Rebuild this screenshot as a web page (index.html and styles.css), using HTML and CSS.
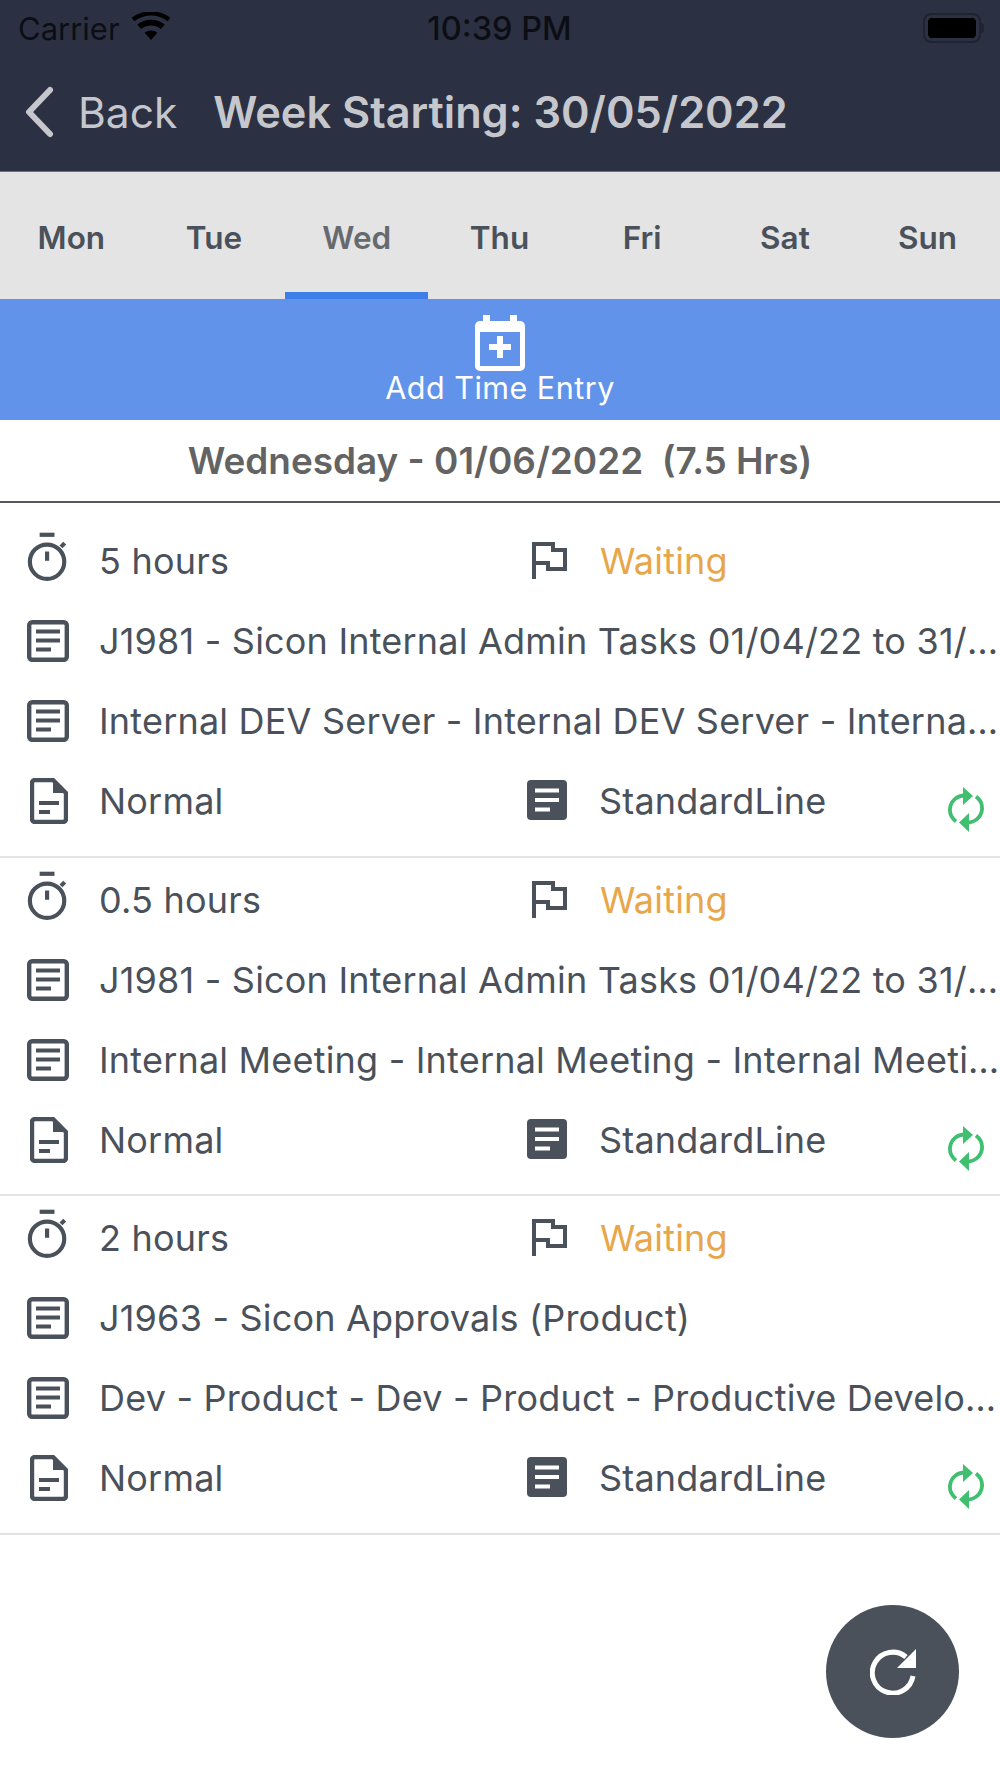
FILE: index.html
```html
<!DOCTYPE html>
<html lang="en">
<head>
<meta charset="utf-8">
<title>Week Starting</title>
<link rel="stylesheet" href="styles.css">
</head>
<body>
<svg class="sprite" aria-hidden="true">
  <defs>
    <symbol id="i-timer" viewBox="0 0 48 56">
      <path d="M15 3h16" class="st" stroke-width="4.500"/>
      <circle cx="23" cy="32" r="18.500" class="st" stroke-width="4.500"/>
      <path d="M23 21v10" class="st" stroke-width="4.500"/>
      <path d="M38 16l4-4" class="st" stroke-width="4.500"/>
    </symbol>
    <symbol id="i-lines" viewBox="0 0 42 42">
      <rect x="2.200" y="2.200" width="37.600" height="37.600" rx="3" class="st" stroke-width="4.400"/>
      <path d="M9 11.500h24M9 20.500h24M9 29.500h15" class="st" stroke-width="4"/>
    </symbol>
    <symbol id="i-file" viewBox="0 0 38 46">
      <path d="M23 2H5a3 3 0 0 0-3 3v36a3 3 0 0 0 3 3h28a3 3 0 0 0 3-3V15z" class="st" stroke-width="4.400"/>
      <path d="M23 2l13 13H23z" class="fl"/>
      <path d="M9 25h20M9 34h11" class="st" stroke-width="4"/>
    </symbol>
    <symbol id="i-flag" viewBox="0 0 36 40">
      <path d="M3 38V3h19v6h12v19H17v-6H3" class="st" stroke-width="4"/>
    </symbol>
    <symbol id="i-card" viewBox="0 0 42 42">
      <rect x="0" y="0" width="40" height="40" rx="4" class="fl"/>
      <path d="M8 10.500h24M8 20h24M8 29.500h15" class="stw" stroke-width="4"/>
    </symbol>
    <symbol id="i-sync" viewBox="0 0 36 48">
      <path d="M8 36.500C3.500 33 1.500 28.500 2 23.500 2.800 16 9 10.500 17 10.500h2" class="stg" stroke-width="3.800"/>
      <path d="M28 11.500c4.500 3.500 6.500 8 6 13-.8 7.500-7 13-15 13h-2" class="stg" stroke-width="3.800"/>
      <path d="M15 2l10 9-10 9z" class="flg"/>
      <path d="M21 28l-10 9.500 10 9.500z" class="flg"/>
    </symbol>
  </defs>
</svg>

<div class="screen">
  <header class="topbar">
    <div class="status">
      <div class="status-left">
        <span>Carrier</span>
        <svg class="wifi" viewBox="0 0 40 30"><path d="M20 29l-6.500-7.500c3.700-3 9.300-3 13 0zM9.800 17.500L5.800 13c8-6.700 20.400-6.700 28.400 0l-4 4.500c-5.800-4.800-14.600-4.800-20.400 0zM2.800 9.500L0 6c11-9 29-9 40 0l-2.800 3.500C27.500 1.700 12.500 1.700 2.800 9.500z"/></svg>
      </div>
      <span class="clock">10:39 PM</span>
      <span class="battery"><span class="battery-level"></span></span>
    </div>
    <div class="nav">
      <svg class="chevron" viewBox="0 0 32 52"><path d="M26 4L5 26l21 22"/></svg>
      <span class="back">Back</span>
      <h1 class="title">Week Starting: 30/05/2022</h1>
    </div>
  </header>

  <nav class="tabs">
    <span class="tab">Mon</span>
    <span class="tab">Tue</span>
    <span class="tab tab-active">Wed</span>
    <span class="tab">Thu</span>
    <span class="tab">Fri</span>
    <span class="tab">Sat</span>
    <span class="tab">Sun</span>
  </nav>

  <button class="add">
    <svg class="add-icon" viewBox="0 0 50 56">
      <path d="M8 0h7v6h20V0h7v6h3a5 5 0 0 1 5 5v40a5 5 0 0 1-5 5H5a5 5 0 0 1-5-5V11a5 5 0 0 1 5-5h3zM5 17v34h40V17zM22 21h6v8h8v6h-8v8h-6v-8h-8v-6h8z" fill-rule="evenodd"/>
    </svg>
    <span>Add Time Entry</span>
  </button>

  <div class="day">Wednesday - 01/06/2022&nbsp; (7.5 Hrs)</div>

  <div class="entries">
    <section class="entry">
      <div class="row">
        <div class="cell"><svg class="ic ic-timer"><use href="#i-timer"/></svg><span>5 hours</span></div>
        <div class="cell"><svg class="ic ic-flag"><use href="#i-flag"/></svg><span class="waiting">Waiting</span></div>
      </div>
      <div class="row"><div class="cell cell-wide"><svg class="ic ic-lines"><use href="#i-lines"/></svg><span class="clip">J1981 - Sicon Internal Admin Tasks 01/04/22 to 31/03/23</span></div></div>
      <div class="row"><div class="cell cell-wide"><svg class="ic ic-lines"><use href="#i-lines"/></svg><span class="clip">Internal DEV Server - Internal DEV Server - Internal DEV Server</span></div></div>
      <div class="row">
        <div class="cell"><svg class="ic ic-file"><use href="#i-file"/></svg><span>Normal</span></div>
        <div class="cell"><svg class="ic ic-card"><use href="#i-card"/></svg><span>StandardLine</span></div>
        <svg class="sync"><use href="#i-sync"/></svg>
      </div>
    </section>

    <section class="entry">
      <div class="row">
        <div class="cell"><svg class="ic ic-timer"><use href="#i-timer"/></svg><span>0.5 hours</span></div>
        <div class="cell"><svg class="ic ic-flag"><use href="#i-flag"/></svg><span class="waiting">Waiting</span></div>
      </div>
      <div class="row"><div class="cell cell-wide"><svg class="ic ic-lines"><use href="#i-lines"/></svg><span class="clip">J1981 - Sicon Internal Admin Tasks 01/04/22 to 31/03/23</span></div></div>
      <div class="row"><div class="cell cell-wide"><svg class="ic ic-lines"><use href="#i-lines"/></svg><span class="clip">Internal Meeting - Internal Meeting - Internal Meeting</span></div></div>
      <div class="row">
        <div class="cell"><svg class="ic ic-file"><use href="#i-file"/></svg><span>Normal</span></div>
        <div class="cell"><svg class="ic ic-card"><use href="#i-card"/></svg><span>StandardLine</span></div>
        <svg class="sync"><use href="#i-sync"/></svg>
      </div>
    </section>

    <section class="entry">
      <div class="row">
        <div class="cell"><svg class="ic ic-timer"><use href="#i-timer"/></svg><span>2 hours</span></div>
        <div class="cell"><svg class="ic ic-flag"><use href="#i-flag"/></svg><span class="waiting">Waiting</span></div>
      </div>
      <div class="row"><div class="cell cell-wide"><svg class="ic ic-lines"><use href="#i-lines"/></svg><span class="clip">J1963 - Sicon Approvals (Product)</span></div></div>
      <div class="row"><div class="cell cell-wide"><svg class="ic ic-lines"><use href="#i-lines"/></svg><span class="clip">Dev - Product - Dev - Product - Productive Development</span></div></div>
      <div class="row">
        <div class="cell"><svg class="ic ic-file"><use href="#i-file"/></svg><span>Normal</span></div>
        <div class="cell"><svg class="ic ic-card"><use href="#i-card"/></svg><span>StandardLine</span></div>
        <svg class="sync"><use href="#i-sync"/></svg>
      </div>
    </section>
  </div>

  <button class="fab" aria-label="Refresh">
    <svg viewBox="0 0 46 46"><path d="M43 27A20.500 20.500 0 1 1 36 8" class="fab-stroke"/><path d="M46 0v19H27z" class="fab-fill"/></svg>
  </button>
</div>
</body>
</html>
```
FILE: styles.css
```css
* { box-sizing: border-box; margin: 0; padding: 0; }
html, body { width: 1000px; height: 1778px; overflow: hidden; background: #fff; }
body { font-family: Inter, "Noto Sans", sans-serif; color: #4a515a; }
.sprite { width: 0; height: 0; display: block; }
.st { fill: none; stroke: #4a515a; }
.stw { fill: none; stroke: #fff; }
.fl { fill: #4a515a; }
.stg { fill: none; stroke: #3fbf6f; }
.flg { fill: #3fbf6f; }

.screen { position: relative; width: 1000px; height: 1778px; }

.topbar { height: 172px; background: #2b3143; border-bottom: 1px solid #6d7280; }
.status { height: 56px; padding: 0 19px 0 18px; display: grid; grid-template-columns: 1fr auto 1fr; align-items: center; color: #0c0e14; font-size: 31px; }
.status-left { display: flex; align-items: center; gap: 11px; }
.wifi { width: 40px; height: 29px; fill: #000; margin-top: -3px; }
.clock { font-size: 32.500px; font-weight: 500; }
.battery { position: relative; justify-self: end; width: 58px; height: 30px; border: 2px solid #20242f; border-radius: 8px; padding: 3px; }
.battery::after { content: ""; position: absolute; left: 56px; top: 8px; width: 3px; height: 10px; background: #20242f; border-radius: 0 3px 3px 0; }
.battery-level { display: block; height: 100%; background: #000; border-radius: 4px; }

.nav { height: 115px; display: flex; align-items: center; padding-left: 24px; padding-bottom: 3px; color: #c6c7cc; }
.chevron { width: 32px; height: 52px; fill: none; stroke: #c6c7cc; stroke-width: 6; stroke-linecap: round; stroke-linejoin: round; }
.back { font-size: 42.500px; margin-left: 22px; }
.title { font-size: 43.300px; font-weight: 600; margin-left: 36px; }

.tabs { height: 127px; background: #e4e4e4; display: grid; grid-template-columns: repeat(7, 1fr); padding-right: 1px; }
.tab { display: flex; align-items: center; justify-content: center; padding-top: 4px; font-size: 31.500px; font-weight: 600; color: #4a515a; }
.tab-active { color: #666a6f; box-shadow: inset 0 -7px 0 #3e7ee8; }

.add { width: 100%; height: 121px; border: 0; background: #6293eb; color: #fff; font: inherit; font-size: 30.500px; line-height: 33px; letter-spacing: .5px; display: flex; flex-direction: column; align-items: center; padding-top: 16px; }
.add-icon { width: 50px; height: 56px; fill: #fff; }

.day { height: 83px; display: flex; align-items: center; justify-content: center; border-bottom: 2px solid #55585f; font-size: 36.900px; font-weight: 600; color: #636363; }

.entries { padding-top: 18px; }
.entry { height: 338px; padding-top: 1.500px; border-bottom: 2px solid #e3e3e3; }
.entry:first-child { height: 337px; padding-top: 0; }
.entry:last-child { height: 338.500px; }
.row { position: relative; height: 80px; display: flex; align-items: center; padding-left: 24px; font-size: 36px; letter-spacing: .2px; }
.cell { width: 500px; display: flex; align-items: center; }
.cell-wide { width: 976px; }
.ic { flex: none; }
.ic-timer { width: 48px; height: 52px; margin-top: -6px; margin-right: 27px; }
.ic-lines { width: 42px; height: 42px; margin-left: 3px; margin-right: 30px; }
.ic-file { width: 38px; height: 46px; margin-left: 6px; margin-right: 31px; }
.ic-flag { width: 36px; height: 40px; margin-left: 19px; margin-right: 33px; }
.ic-card { width: 42px; height: 42px; margin-left: 15px; margin-right: 30px; }
.clip { min-width: 0; overflow: hidden; white-space: nowrap; text-overflow: ellipsis; }
.waiting { color: #e8a64a; }
.sync { position: absolute; right: 16px; top: 24px; width: 36px; height: 48px; }

.fab { position: absolute; left: 826px; top: 1605px; width: 133px; height: 133px; border-radius: 50%; background: #4a515a; border: 0; display: flex; align-items: center; justify-content: center; }
.fab svg { width: 46px; height: 46px; }
.fab-stroke { fill: none; stroke: #fff; stroke-width: 5; }
.fab-fill { fill: #fff; }
```
